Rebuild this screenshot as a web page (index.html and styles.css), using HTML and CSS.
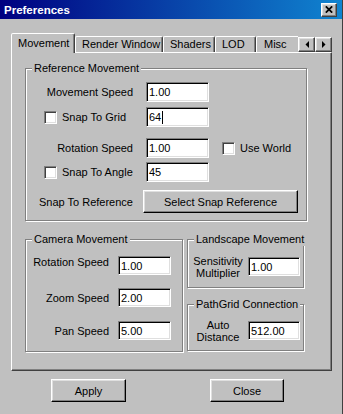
FILE: index.html
```html
<!DOCTYPE html>
<html>
<head>
<meta charset="utf-8">
<title>Preferences</title>
<link rel="stylesheet" href="styles.css">
</head>
<body>
<div class="window">
  <div class="titlebar">
    <span class="title">Preferences</span>
    <span class="close-btn"><svg width="8" height="7" viewBox="0 0 8 7"><path d="M0.8 0.3 L7.2 6.7 M7.2 0.3 L0.8 6.7" stroke="#000" stroke-width="1.7" fill="none"/></svg></span>
  </div>
  <div class="body">
    <div class="tabrow">
      <div class="tablist">
        <div class="tab active w-move">Movement</div>
        <div class="tab w-render">Render Window</div>
        <div class="tab w-shaders">Shaders</div>
        <div class="tab w-lod">LOD</div>
        <div class="tab w-misc">Misc</div>
      </div>
      <div class="arrow-btn"><svg width="4" height="7" viewBox="0 0 4 7"><path d="M4 0 V7 L0.5 3.5 Z" fill="#000"/></svg></div>
      <div class="arrow-btn"><svg width="4" height="7" viewBox="0 0 4 7"><path d="M0 0 V7 L3.5 3.5 Z" fill="#000"/></svg></div>
    </div>
    <div class="panel">
      <div class="group g-ref">
        <span class="group-title">Reference Movement</span>
        <div class="row r1">
          <div class="lbl-col right">Movement Speed</div>
          <div class="field">1.00</div>
        </div>
        <div class="row r2">
          <div class="lbl-col check"><span class="cb"></span><span>Snap To Grid</span></div>
          <div class="field">64<span class="caret"></span></div>
        </div>
        <div class="row r3">
          <div class="lbl-col right">Rotation Speed</div>
          <div class="field">1.00</div>
          <span class="cb use-world"></span><span class="cb-label">Use World</span>
        </div>
        <div class="row r4">
          <div class="lbl-col check"><span class="cb"></span><span>Snap To Angle</span></div>
          <div class="field">45</div>
        </div>
        <div class="row r5">
          <div class="lbl-col plain">Snap To Reference</div>
          <div class="btn snap-btn">Select Snap Reference</div>
        </div>
      </div>
      <div class="lower">
        <div class="group g-cam">
          <span class="group-title">Camera Movement</span>
          <div class="row c1">
            <div class="lbl-col cam-lbl lifted">Rotation Speed</div>
            <div class="field cam-field">1.00</div>
          </div>
          <div class="row c2">
            <div class="lbl-col cam-lbl">Zoom Speed</div>
            <div class="field cam-field">2.00</div>
          </div>
          <div class="row c3">
            <div class="lbl-col cam-lbl">Pan Speed</div>
            <div class="field cam-field">5.00</div>
          </div>
        </div>
        <div class="rightcol">
          <div class="group g-land">
            <span class="group-title">Landscape Movement</span>
            <div class="row s1">
              <div class="lbl-col side-lbl">Sensitivity<br>Multiplier</div>
              <div class="field side-field">1.00</div>
            </div>
          </div>
          <div class="group g-path">
            <span class="group-title">PathGrid Connection</span>
            <div class="row s2">
              <div class="lbl-col side-lbl">Auto<br>Distance</div>
              <div class="field side-field">512.00</div>
            </div>
          </div>
        </div>
      </div>
    </div>
    <div class="actions">
      <div class="btn action-btn">Apply</div>
      <div class="btn action-btn close">Close</div>
    </div>
  </div>
</div>
</body>
</html>
```

FILE: styles.css
```css
* { box-sizing: border-box; }
html, body { margin: 0; padding: 0; }
body {
  font-family: "Liberation Sans", Arial, sans-serif;
  font-size: 11px;
  color: #000;
  background: #c0c0c0;
}
.window {
  width: 343px;
  height: 414px;
  background: #c0c0c0;
  border-right: 1px solid #404040;
  overflow: hidden;
}
.titlebar {
  height: 19px;
  display: flex;
  align-items: center;
  justify-content: space-between;
  padding: 0 5px 0 4px;
  background: linear-gradient(to right, #000080, #1084d0);
}
.title {
  color: #fff;
  font-weight: bold;
  font-size: 11.5px;
}
.close-btn {
  width: 16px;
  height: 14px;
  display: flex;
  align-items: center;
  justify-content: center;
  background: #c0c0c0;
  border: 1px solid;
  border-color: #fff #404040 #404040 #fff;
  box-shadow: inset -1px -1px 0 #808080, inset 1px 1px 0 #dfdfdf;
}
.body { padding: 14px 0 0 11px; }

/* tabs */
.tabrow {
  display: flex;
  align-items: flex-end;
  width: 321px;
  height: 20px;
  position: relative;
  z-index: 1;
}
.tablist {
  display: flex;
  align-items: flex-end;
  width: 287px;
  height: 20px;
  overflow: hidden;
  flex: none;
}
.tab {
  flex: none;
  height: 16px;
  margin-bottom: 1px;
  padding-left: 6px;
  line-height: 14px;
  white-space: nowrap;
  border: 1px solid;
  border-bottom: none;
  border-color: #fff #404040 transparent #fff;
  border-radius: 2px 2px 0 0;
  box-shadow: inset -1px 0 0 #808080;
}
.tab.active {
  height: 20px;
  margin-bottom: 0;
  line-height: 18px;
  background: #c0c0c0;
}
.w-move { width: 64px; }
.w-render { width: 88px; }
.w-shaders { width: 52px; }
.w-lod { width: 41px; }
.w-misc { width: 50px; padding-left: 7px; }
.arrow-btn {
  flex: none;
  width: 17px;
  height: 15px;
  margin-bottom: 1px;
  display: flex;
  align-items: center;
  justify-content: center;
  background: #c0c0c0;
  border: 1px solid;
  border-color: #fff #404040 #404040 #fff;
  box-shadow: inset -1px -1px 0 #808080, inset 1px 1px 0 #dfdfdf;
}

/* panel */
.panel {
  width: 321px;
  height: 319px;
  margin-top: -1px;
  border: 1px solid;
  border-color: #fff #404040 #404040 #fff;
  box-shadow: inset -1px -1px 0 #808080;
  padding: 15px 0 0 13px;
}
.group {
  position: relative;
  border: 1px solid #808080;
  box-shadow: inset 1px 1px 0 #fff, 1px 1px 0 #fff;
}
.group-title {
  position: absolute;
  top: -7px;
  left: 6px;
  padding: 0 2px;
  line-height: 13px;
  background: #c0c0c0;
  white-space: nowrap;
}
.g-ref { width: 282px; height: 153px; }
.lower { display: flex; gap: 4px; margin-top: 18px; }
.g-cam { width: 158px; height: 113px; }
.rightcol { display: flex; flex-direction: column; gap: 16px; }
.g-land { width: 117px; height: 49px; }
.g-path { width: 117px; height: 47px; }

/* rows */
.row { display: flex; align-items: center; }
.g-ref .row { height: 20px; }
.r1 { margin-top: 13px; }
.r2 { margin-top: 5px; }
.r3 { margin-top: 11px; }
.r4 { margin-top: 4px; }
.r5 { margin-top: 8px; height: 23px !important; }
.lbl-col {
  flex: none;
  width: 120px;
  display: flex;
  align-items: center;
  white-space: nowrap;
}
.lbl-col.right { justify-content: flex-end; padding-right: 13px; }
.lbl-col.check { padding-left: 18px; gap: 5px; }
.lbl-col.plain { padding-left: 13px; }

.field {
  flex: none;
  width: 63px;
  height: 20px;
  background: #fff;
  border: 1px solid;
  border-color: #808080 #fff #fff #808080;
  box-shadow: inset 1px 1px 0 #000, inset -1px -1px 0 #dfdfdf;
  padding-left: 2px;
  display: flex;
  align-items: center;
  white-space: nowrap;
}
.caret {
  display: inline-block;
  width: 1px;
  height: 13px;
  background: #000;
  margin-left: 1px;
}
.cb {
  flex: none;
  width: 13px;
  height: 13px;
  background: #fff;
  border: 1px solid;
  border-color: #808080 #fff #fff #808080;
  box-shadow: inset 1px 1px 0 #404040, inset -1px -1px 0 #dfdfdf;
}
.use-world { margin-left: 13px; }
.cb-label { margin-left: 5px; white-space: nowrap; }

.btn {
  display: flex;
  align-items: center;
  justify-content: center;
  background: #c0c0c0;
  border: 1px solid;
  border-color: #fff #000 #000 #fff;
  box-shadow: inset -1px -1px 0 #808080, inset 1px 1px 0 #dfdfdf;
  white-space: nowrap;
}
.snap-btn { width: 155px; height: 23px; margin-left: -3px; }

/* camera */
.g-cam .row { height: 19px; }
.c1 { margin-top: 16px; }
.c2 { margin-top: 13px; }
.c3 { margin-top: 14px; }
.cam-lbl { width: 83px; justify-content: flex-end; }
.cam-lbl.lifted { padding-bottom: 7px; }
.cam-field { width: 53px; height: 19px; margin-left: 9px; }

/* side groups */
.s1 { margin-top: 17px; height: 19px; }
.s2 { margin-top: 16px; height: 19px; }
.side-lbl {
  width: 60px;
  display: block;
  text-align: center;
  line-height: 12px;
}
.side-field { width: 52px; height: 19px; }

/* dialog buttons */
.actions {
  display: flex;
  gap: 84px;
  margin-top: 8px;
  padding-left: 40px;
}
.action-btn { width: 75px; height: 23px; }
.action-btn.close { width: 74px; }
```
